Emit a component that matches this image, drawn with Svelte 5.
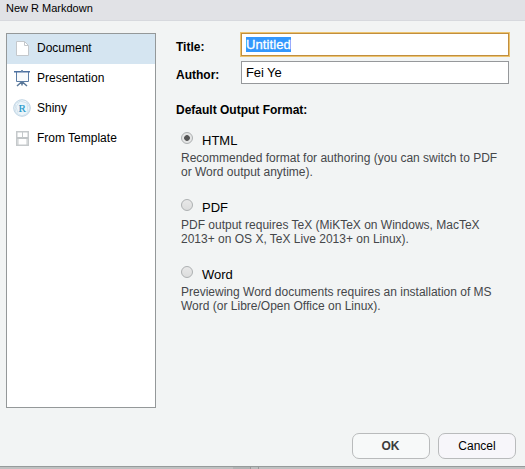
<script>
  const formats = [
    { name: 'HTML', lines: ['Recommended format for authoring (you can switch to PDF', 'or Word output anytime).'] },
    { name: 'PDF', lines: ['PDF output requires TeX (MiKTeX on Windows, MacTeX', '2013+ on OS X, TeX Live 2013+ on Linux).'] },
    { name: 'Word', lines: ['Previewing Word documents requires an installation of MS', 'Word (or Libre/Open Office on Linux).'] }
  ];
  let selected = $state('HTML');
</script>

<div class="dialog">
  <header>New R Markdown</header>
  <main>
    <nav>
      <div class="item active">
        <svg width="18" height="18" viewBox="0 0 18 18"><path d="M3.5 2.5h8l4 4v10h-12z" fill="#fff" stroke="#c4c8cc" /><path d="M11.5 2.5v4h4" fill="none" stroke="#c4c8cc" /></svg>
        <span>Document</span>
      </div>
      <div class="item">
        <svg width="18" height="18" viewBox="0 0 18 18"><path d="M3.5 3v9.5h12V3" fill="#f8fafc" stroke="#5c7da5" /><path d="M1 2.75h16" stroke="#4c70a0" stroke-width="1.5" /><path d="M9 1v1.5" stroke="#7894b5" stroke-width="2" /><path d="M9 12.5v4M8.5 13l-4.5 4M9.5 13l4.5 4" fill="none" stroke="#597798" stroke-width="1.5" /></svg>
        <span>Presentation</span>
      </div>
      <div class="item">
        <svg width="18" height="18" viewBox="0 0 18 18"><circle cx="9" cy="9" r="8.3" fill="#edf5fa" stroke="#bed3e3" /><path d="M2 5l5-3 7 2 3 5-2 5-6 3-6-3-1-5 5-7M2 5l3 9M14 4l1 10" fill="none" stroke="#c8dce9" stroke-width=".7" /><text x="9.2" y="12.8" text-anchor="middle" font-family="Liberation Serif, serif" font-size="11" fill="#2598cb" stroke="#2598cb" stroke-width=".2">R</text></svg>
        <span>Shiny</span>
      </div>
      <div class="item">
        <svg width="18" height="18" viewBox="0 0 18 18"><path d="M3.75 2.75h11.5v13.5H3.75z" fill="#fff" stroke="#c5c9cb" stroke-width="1.5" /><path d="M4 9h11" stroke="#c1c5c7" stroke-width="2" /><path d="M9.5 3v6M5 10v6M14 10v6" fill="none" stroke="#c5c9cb" /></svg>
        <span>From Template</span>
      </div>
    </nav>

    <section>
      <div class="field first"><b>Title:</b><div class="input focused"><span class="selection">Untitled</span></div></div>
      <div class="field"><b>Author:</b><div class="input">Fei Ye</div></div>
      <h2>Default Output Format:</h2>
      {#each formats as format}
        <div class="format">
          <label>
            <input type="radio" name="format" value={format.name} bind:group={selected} />
            <span>{format.name}</span>
          </label>
          <p>{#each format.lines as line}<span>{line}</span>{/each}</p>
        </div>
      {/each}
    </section>
  </main>
  <footer><button class="ok">OK</button><button>Cancel</button></footer>
  <div class="behind"><i></i><i class="tab"></i></div>
</div>

<style>
  .dialog { width: 525px; height: 469px; overflow: hidden; display: flex; flex-direction: column; background: #f2f4f4; color: #000; font-family: "Liberation Sans", Arial, sans-serif; font-size: 12px; }
  .dialog * { box-sizing: border-box; }
  header { height: 21px; flex: none; padding: 2px 6px; font-size: 11px; line-height: 13px; background: #e1e2e6; border-bottom: 1px solid #d7d9de; }
  main { height: 387px; flex: none; display: flex; padding: 12px 0 0 6px; }
  nav { width: 150px; height: 375px; flex: none; border: 1px solid #949899; background: #fff; }
  .item { display: flex; align-items: center; height: 30px; padding: 0 0 2px 6px; gap: 6px; }
  .item svg { flex: none; }
  .item.active { background: #d5e5f1; }
  section { margin-left: 20px; width: 340px; }
  .field { display: flex; height: 23px; }
  .field.first { margin-bottom: 5px; }
  .field b { width: 65px; padding-top: 7px; line-height: 14px; flex: none; }
  .input { width: 268px; height: 23px; padding: 3px 4px; border: 1px solid #96989b; background: #fff; font-size: 13px; line-height: 15px; letter-spacing: -.1px; }
  .focused { border-color: #c18e3e; box-shadow: 0 0 0 1px #edc46f; }
  .selection { display: inline-block; background: #3297fd; color: #fff; width: 45px; letter-spacing: .1px; -webkit-text-stroke: .3px #fff; }
  h2 { margin: 19px 0 0; font-size: 12px; line-height: 14px; height: 28px; }
  .format { height: 67px; padding-left: 5px; }
  label { display: flex; height: 20px; font-size: 13px; line-height: 15px; }
  label span { padding-top: 2px; margin-left: 9px; }
  input { appearance: none; width: 12px; height: 12px; margin: 1px 0 0; border: 1px solid #adb0b1; border-radius: 50%; background: linear-gradient(#e8e8e8, #dcdddd); }
  input:checked { background: radial-gradient(circle, #555 0 2.5px, #e4e5e5 3.2px); }
  p { margin: 0; color: #45474a; line-height: 14px; white-space: nowrap; }
  p span { display: block; }
  footer { height: 58px; flex: none; padding: 25px 0 0 352px; display: flex; gap: 8px; }
  button { width: 78px; height: 26px; padding: 0; border: 1px solid #b9bbbc; border-radius: 7px; background: #f7f6fa; color: #000; font: 12px "Liberation Sans", Arial, sans-serif; }
  button.ok { color: #3c3c3c; background: #f7f9f9; font-weight: bold; padding-right: 1px; }
  .behind { display: flex; height: 3px; background: #bfc1c1; border-top: 1px solid #979b9b; padding-left: 233px; }
  i { display: block; height: 2px; width: 18px; background: #b1b4b4; border-right: 1px solid #999; }
  i.tab { width: 8px; background: #bbbebe; }
</style>
